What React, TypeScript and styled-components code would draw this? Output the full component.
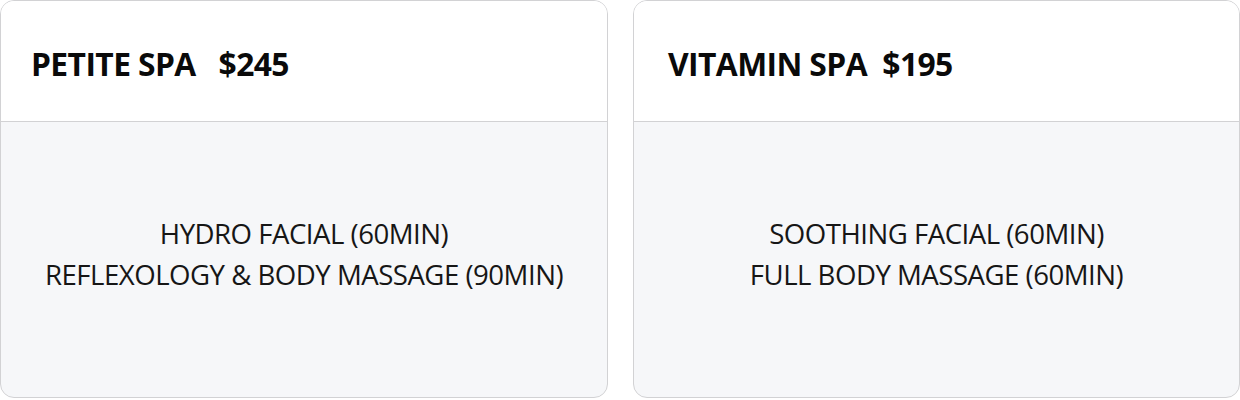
import React, { FC } from 'react'
import styled, { createGlobalStyle } from 'styled-components'

const GlobalStyle = createGlobalStyle`
  html, body {
    margin: 0;
    padding: 0;
    background: #ffffff;
  }
  body {
    font-family: 'Open Sans', 'Liberation Sans', sans-serif;
    color: #111111;
  }
`

const Grid = styled.div`
  display: grid;
  grid-template-columns: 608px 607px;
  column-gap: 25px;
  width: 1240px;
`

const Card = styled.div`
  height: 398px;
  box-sizing: border-box;
  border: 1px solid #d2d2d4;
  border-radius: 14px;
  overflow: hidden;
  display: flex;
  flex-direction: column;
  background: #f6f7f9;
`

const Header = styled.div<{ pad: number }>`
  height: 121px;
  flex: 0 0 auto;
  box-sizing: border-box;
  background: #ffffff;
  border-bottom: 1px solid #d2d2d4;
  display: flex;
  align-items: center;
  padding-left: ${({ pad }) => pad}px;
  padding-top: 4px;
`

const Title = styled.h2`
  margin: 0;
  font-size: 31.8px;
  font-weight: 700;
  letter-spacing: -0.6px;
  white-space: pre;
  color: #0a0a0a;
`

const Body = styled.div`
  flex: 1;
  display: flex;
  flex-direction: column;
  align-items: center;
  justify-content: center;
  padding-bottom: 12px;
`

const Item = styled.p`
  margin: 0;
  font-size: 27.6px;
  line-height: 41px;
  letter-spacing: -0.5px;
  color: #161616;
  white-space: nowrap;
`

type Pkg = { name: string; pad: number; items: string[] }

const packages: Pkg[] = [
  { name: 'PETITE SPA   $245', pad: 30, items: ['HYDRO FACIAL (60MIN)', 'REFLEXOLOGY & BODY MASSAGE (90MIN)'] },
  { name: 'VITAMIN SPA  $195', pad: 34, items: ['SOOTHING FACIAL (60MIN)', 'FULL BODY MASSAGE (60MIN)'] },
]

const PackageCard: FC<{ pkg: Pkg }> = ({ pkg }) => (
  <Card>
    <Header pad={pkg.pad}>
      <Title>{pkg.name}</Title>
    </Header>
    <Body>
      {pkg.items.map((item) => <Item key={item}>{item}</Item>)}
    </Body>
  </Card>
)

const App: FC = () => (
  <>
    <GlobalStyle />
    <Grid>
      {packages.map((p) => <PackageCard key={p.name} pkg={p} />)}
    </Grid>
  </>
)

export default App
